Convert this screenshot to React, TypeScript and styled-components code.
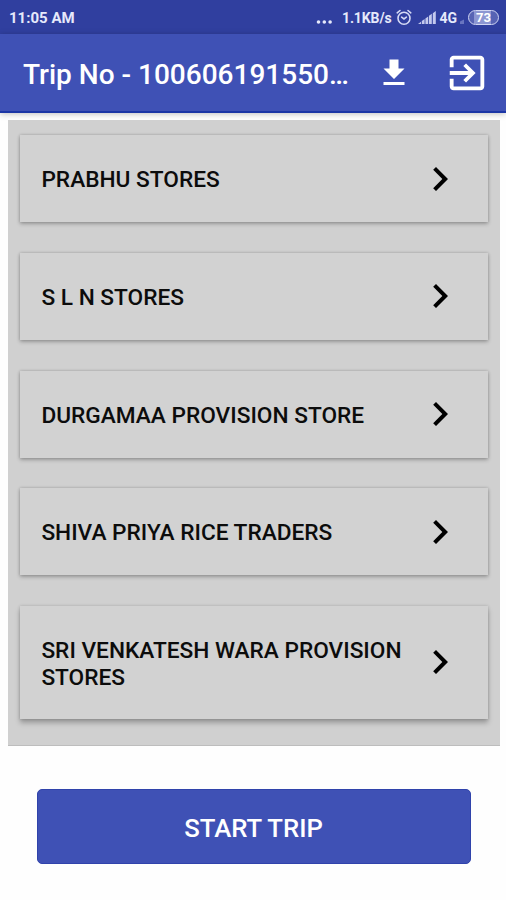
import React from "react";
import styled, { createGlobalStyle } from "styled-components";

const GlobalStyle = createGlobalStyle`
  * { box-sizing: border-box; }
  html, body { margin: 0; padding: 0; background: #fefefe; }
  body { font-family: Roboto, "Liberation Sans", sans-serif; overflow: hidden; }
`;

const Screen = styled.div`
  width: 506px;
  height: 900px;
  display: flex;
  flex-direction: column;
  background: #fefefe;
`;

const StatusBar = styled.header`
  height: 34px;
  flex: none;
  display: flex;
  align-items: center;
  padding: 1px 7px 0 9px;
  background: #303f9f;
  color: #e6e9fb;
`;

const Clock = styled.span`
  flex: 1;
  font-size: 15px;
  font-weight: 700;
  line-height: 18px;
  white-space: nowrap;
`;

const StatusText = styled.span<{ $gap: number }>`
  font-size: 14px;
  letter-spacing: -0.1px;
  margin-right: ${(p) => p.$gap}px;
  font-weight: 700;
  line-height: 18px;
  white-space: nowrap;
`;

const StatusIcon = styled.svg<{ $gap: number }>`
  display: block;
  flex: none;
  margin-right: ${(p) => p.$gap}px;
`;

const Battery = styled.span`
  width: 31px;
  height: 15px;
  display: flex;
  align-items: center;
  justify-content: center;
  border: 1.5px solid #d0d5f2;
  border-radius: 8px;
  background: linear-gradient(90deg, #5763b4 18%, #8c96d2 18%, #8c96d2 76%, #5763b4 76%);
  font-size: 13px;
  font-weight: 700;
  line-height: 12px;
  color: #fff;
`;

const AppBar = styled.div`
  height: 79px;
  flex: none;
  display: flex;
  align-items: center;
  padding: 1px 16px 0 23px;
  background: #3f51b5;
  border-bottom: 2px solid #1c36a6;
  box-shadow: 0 1px 6px rgba(0, 0, 0, 0.25);
  color: #fff;
`;

const Title = styled.h1`
  flex: 1;
  margin: 0;
  padding-top: 4px;
  font-size: 28px;
  font-weight: 500;
  line-height: 32px;
  white-space: nowrap;
`;

const ActionIcon = styled.svg<{ $gap: number }>`
  display: block;
  flex: none;
  fill: #fff;
  margin-right: ${(p) => p.$gap}px;
`;

const StoreList = styled.main`
  width: 491.5px;
  height: 625.5px;
  flex: none;
  display: flex;
  flex-direction: column;
  gap: 30.7px;
  margin: 7px 0 0 8px;
  padding: 15.2px 11.5px 0 12px;
  background: #d0d0d0;
  border-bottom: 1px solid #bdbdbd;
`;

const StoreCard = styled.div<{ $height: number; $raised?: boolean }>`
  height: ${(p) => p.$height}px;
  flex: none;
  display: flex;
  align-items: center;
  padding: 0 24px 0 21.4px;
  background: #d2d2d2;
  box-shadow: ${(p) =>
    p.$raised
      ? "0 4px 5px rgba(0,0,0,0.26), 0 0 3px rgba(0,0,0,0.18)"
      : "0 2px 4px rgba(0,0,0,0.24), 0 0 3px rgba(0,0,0,0.2)"};
`;

const StoreName = styled.span`
  flex: 1;
  padding-top: 2.4px;
  font-size: 22.68px;
  font-weight: 500;
  line-height: 27px;
  color: #0c0c0c;
  white-space: pre;
`;

const Chevron = styled.svg`
  display: block;
  flex: none;
  width: 48px;
  height: 48px;
`;

const StartButton = styled.button`
  width: 434px;
  height: 75px;
  flex: none;
  margin: 43.5px 0 0 36.5px;
  padding: 3px 0 0;
  border: 1px solid #3043ab;
  border-radius: 5px;
  background: #3f51b5;
  color: #fff;
  font-family: inherit;
  font-size: 25.7px;
  font-weight: 500;
  line-height: 30px;
`;

const stores = [
  { name: "PRABHU STORES", height: 87 },
  { name: "S L N STORES", height: 87 },
  { name: "DURGAMAA PROVISION STORE", height: 87 },
  { name: "SHIVA PRIYA RICE TRADERS", height: 87 },
  { name: "SRI VENKATESH WARA PROVISION\nSTORES", height: 113, raised: true },
];

export default function App() {
  return (
    <>
      <GlobalStyle />
      <Screen>
        <StatusBar>
          <Clock>11:05 AM</Clock>
          <StatusIcon $gap={9} width="17" height="18" viewBox="0 0 17 18" fill="#e6e9fb">
            <circle cx="2.5" cy="13" r="1.8" />
            <circle cx="8.3" cy="13" r="1.8" />
            <circle cx="14.1" cy="13" r="1.8" />
          </StatusIcon>
          <StatusText $gap={4}>1.1KB/s</StatusText>
          <StatusIcon $gap={6} width="16" height="17" viewBox="0 0 16 17" fill="none" stroke="#d5daf5" strokeWidth="1.6" strokeLinecap="round">
            <circle cx="8" cy="9.2" r="6" />
            <path d="M1.2 3.8 4 1.5M14.8 3.8 12 1.5M5.6 8.2 8 10l2.4-1.8" />
          </StatusIcon>
          <StatusIcon $gap={4} width="18" height="14" viewBox="0 0 18 14" fill="#c3c9ee">
            <path d="M0 13l3-2.3V13zM3.8 13v-3l2.8-2V13zM7.4 13V7.4l2.8-2V13zM11 13V4.8l2.8-2V13zM14.8 13V2.2L17.8 0v13z" />
          </StatusIcon>
          <StatusText $gap={3}>4G</StatusText>
          <StatusIcon $gap={4} width="4" height="14" viewBox="0 0 4 14" fill="#6975c0">
            <path d="M0 13v-2.5L4 8.5V13z" />
          </StatusIcon>
          <Battery>73</Battery>
        </StatusBar>
        <AppBar>
          <Title>Trip No - 100606191550…</Title>
          <ActionIcon $gap={32} width="36" height="36" viewBox="0 0 24 24">
            <path d="M19 9h-4V3H9v6H5l7 7 7-7zM5 18v2h14v-2H5z" />
          </ActionIcon>
          <ActionIcon $gap={0} width="46" height="46" viewBox="0 0 24 24">
            <path d="M10.09 15.59 11.5 17l5-5-5-5-1.41 1.41L12.67 11H3v2h9.67l-2.58 2.59zM19 3H5c-1.11 0-2 .9-2 2v4h2V5h14v14H5v-4H3v4c0 1.1.89 2 2 2h14c1.1 0 2-.9 2-2V5c0-1.1-.9-2-2-2z" />
          </ActionIcon>
        </AppBar>
        <StoreList>
          {stores.map((s) => (
            <StoreCard key={s.name} $height={s.height} $raised={s.raised}>
              <StoreName>{s.name}</StoreName>
              <Chevron viewBox="0 0 24 24">
                <path d="M10 6 8.59 7.41 13.17 12l-4.58 4.59L10 18l6-6z" />
              </Chevron>
            </StoreCard>
          ))}
        </StoreList>
        <StartButton>START TRIP</StartButton>
      </Screen>
    </>
  );
}
